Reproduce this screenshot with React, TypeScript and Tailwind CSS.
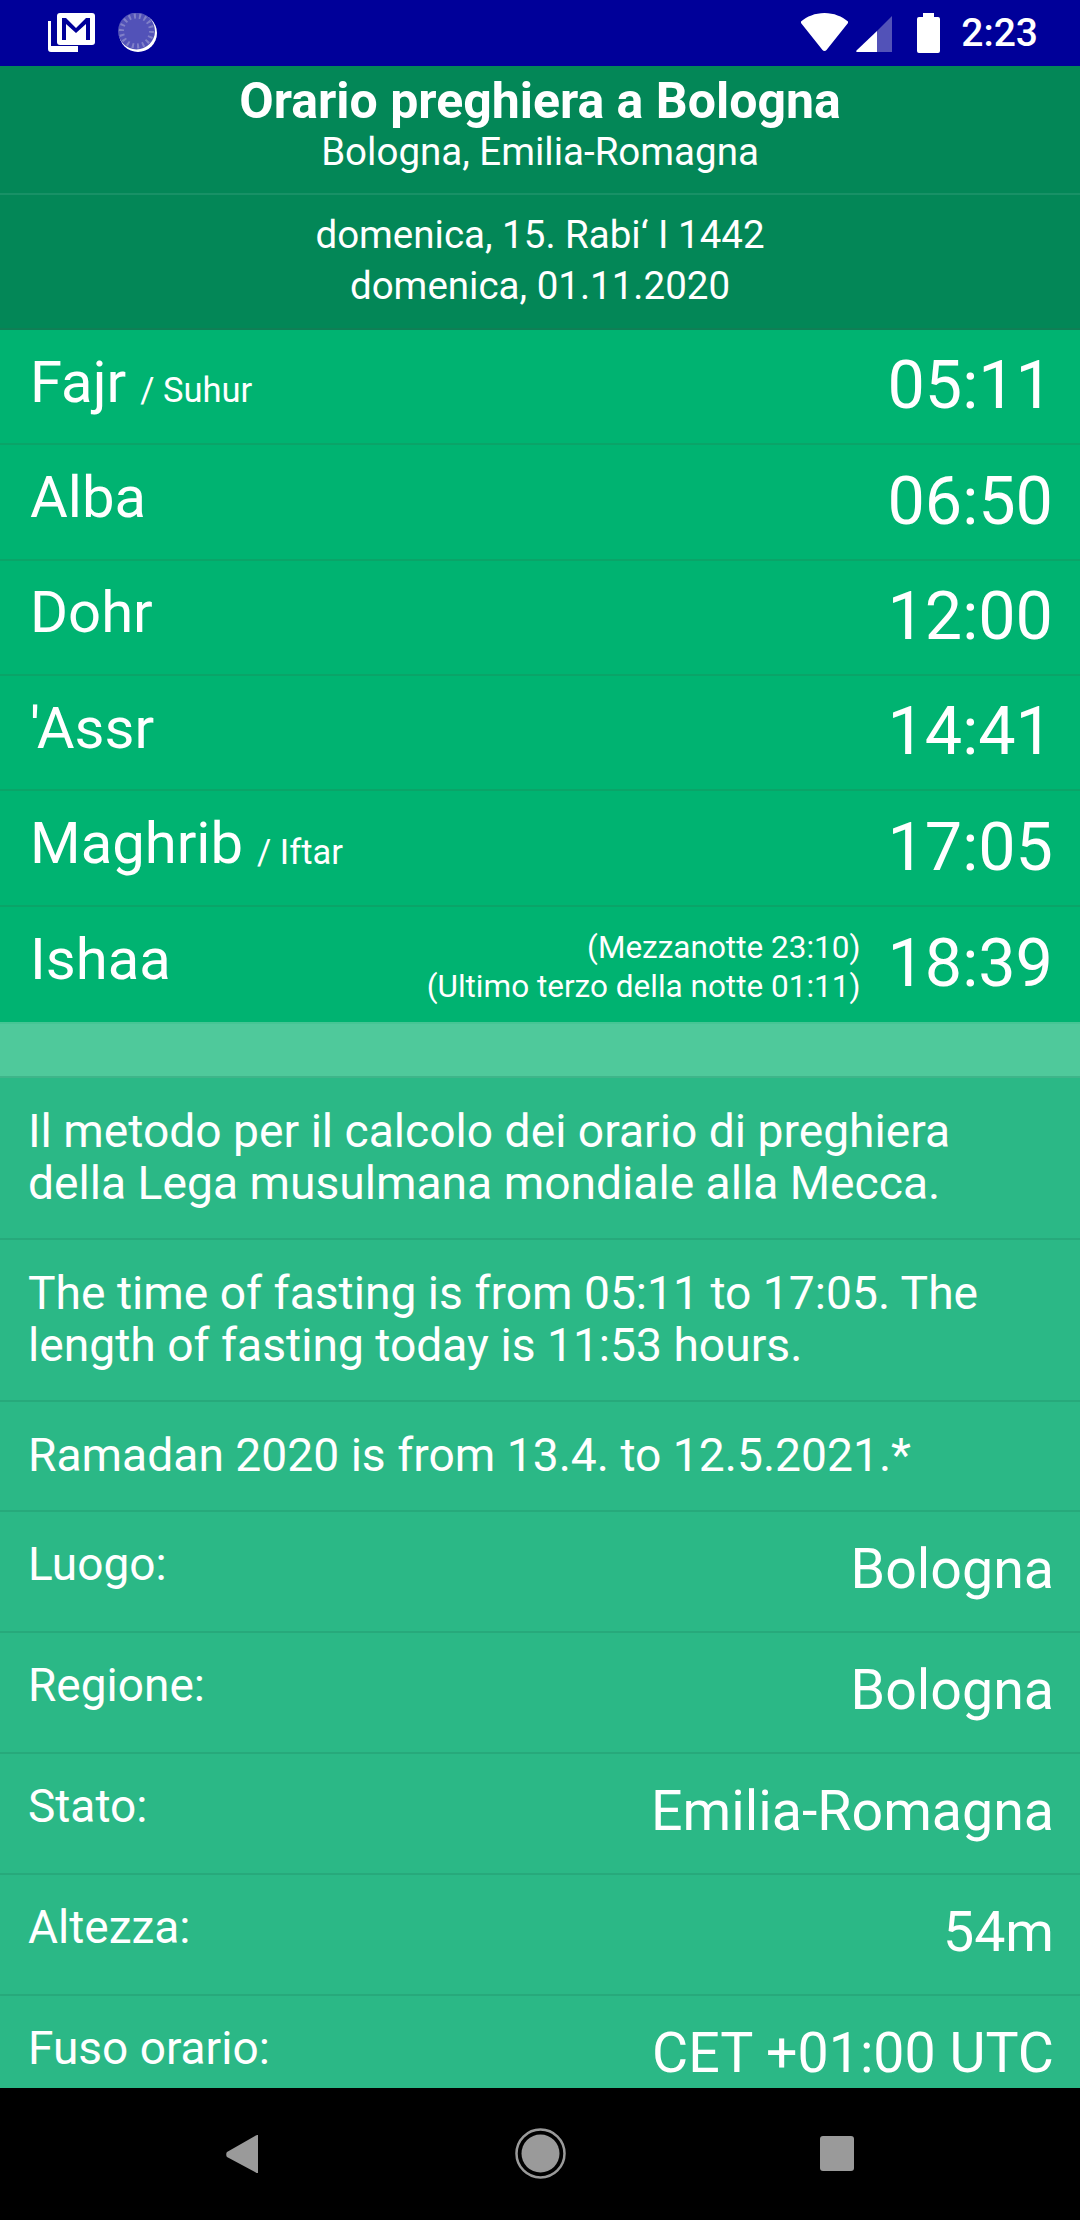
import React from 'react';

const prayers = [
  { name: 'Fajr', sub: '/ Suhur', time: '05:11' },
  { name: 'Alba', time: '06:50' },
  { name: 'Dohr', time: '12:00' },
  { name: "'Assr", time: '14:41' },
  { name: 'Maghrib', sub: '/ Iftar', time: '17:05' },
  { name: 'Ishaa', notes: ['(Mezzanotte 23:10)', '(Ultimo terzo della notte 01:11)'], time: '18:39' },
];

const infoTexts = [
  { text: 'Il metodo per il calcolo dei orario di preghiera della Lega musulmana mondiale alla Mecca.', h: 'h-[162px]' },
  { text: 'The time of fasting is from 05:11 to 17:05. The length of fasting today is 11:53 hours.', h: 'h-[162px]' },
  { text: 'Ramadan 2020 is from 13.4. to 12.5.2021.*', h: 'h-[110px]' },
];

const details = [
  { label: 'Luogo:', value: 'Bologna' },
  { label: 'Regione:', value: 'Bologna' },
  { label: 'Stato:', value: 'Emilia-Romagna' },
  { label: 'Altezza:', value: '54m' },
  { label: 'Fuso orario:', value: 'CET +01:00 UTC' },
];

function StatusBar() {
  return (
    <div className="h-[66px] bg-[#000099] flex items-center relative shrink-0">
      {/* mail stack */}
      <svg className="absolute left-[48px] top-[13px]" width="47" height="39" viewBox="0 0 47 39">
        <path d="M0 8h3v25h27v6H3a3 3 0 0 1-3-3z" fill="#fff" />
        <rect x="9" y="0" width="38" height="32" rx="3" fill="#fff" />
        <path d="M14 27V5h4l10 10L38 5h4v22h-4V11l-10 9-10-9v16z" fill="#000099" />
      </svg>
      {/* sync spinner */}
      <svg className="absolute left-[118px] top-[13px]" width="40" height="40" viewBox="0 0 40 40">
        <circle cx="20" cy="20" r="19" fill="#fff" />
        <circle cx="18.5" cy="18" r="18.5" fill="#5252b8" />
        <circle cx="18.5" cy="18" r="15" fill="none" stroke="#8080c8" strokeWidth="5" strokeDasharray="2 3.2" />
      </svg>
      <div className="ml-auto mr-[42px] flex items-center">
        <svg className="mr-[8px] mt-[-2px]" width="47" height="38" viewBox="0 0 47 38">
          <path d="M23.5 0C14 0 6 3.5 0 8.5c-.5.5-.5 1 0 1.500L21.500 37c1 1.300 3 1.300 4 0L47 10c.5-.5.5-1 0-1.500C41 3.500 33 0 23.500 0z" fill="#fff" />
        </svg>
        <svg className="mr-[24px]" width="37" height="37" viewBox="0 0 37 37">
          <path d="M21 16 36 1v36H21z" fill="#5252b8" />
          <path d="M21 16v21H1c-1 0-1-1-.5-1.500z" fill="#fff" />
        </svg>
        <svg className="mr-[21px]" width="23" height="40" viewBox="0 0 23 40">
          <path d="M6 0h11v4h4a2 2 0 0 1 2 2v32a2 2 0 0 1-2 2H2a2 2 0 0 1-2-2V6a2 2 0 0 1 2-2h4z" fill="#fff" />
        </svg>
        <span className="text-[39px] leading-none text-white font-[Roboto,sans-serif] font-medium">2:23</span>
      </div>
    </div>
  );
}

function NavBar() {
  return (
    <div className="h-[132px] bg-black flex items-center relative shrink-0">
      <svg className="absolute left-[226px] top-[47px]" width="33" height="38" viewBox="0 0 33 38">
        <path d="M32 0v38c-1 0-2 0-3-1L1 22c-1-1-1-4 0-5L29 1c1-1 2-1 3-1z" fill="#9a9a9a" />
      </svg>
      <svg className="absolute left-[515px] top-[40px]" width="51" height="51" viewBox="0 0 51 51">
        <circle cx="25.500" cy="25.500" r="24" fill="none" stroke="#9a9a9a" strokeWidth="2.500" />
        <circle cx="25.500" cy="25.500" r="19" fill="#9a9a9a" />
      </svg>
      <div className="absolute left-[820px] top-[48px] w-[34px] h-[35px] rounded-[3px] bg-[#9a9a9a]" />
    </div>
  );
}

export default function App() {
  return (
    <div className="w-[1080px] h-[2220px] overflow-hidden flex flex-col text-white font-[Roboto,sans-serif]">
      <StatusBar />
      {/* Header */}
      <div className="h-[129px] bg-[#038757] border-b-2 border-[#189166] flex flex-col items-center shrink-0">
        <h1 className="text-[50px] leading-[58px] font-bold mt-[6px]">Orario preghiera a Bologna</h1>
        <p className="text-[38.5px] leading-[44px]">Bologna, Emilia-Romagna</p>
      </div>
      <div className="h-[135px] bg-[#038757] border-b-2 border-[#0f7f55] flex flex-col items-center justify-center shrink-0 text-[38.5px] leading-[51px] pb-[3px]">
        <p>domenica, 15. Rabi‘ I 1442</p>
        <p>domenica, 01.11.2020</p>
      </div>

      {/* Prayer times */}
      <div className="shrink-0">
        {prayers.map((p) => (
          <div key={p.name} className="h-[115.33px] bg-[#00b371] border-b-2 last:border-b-0 border-[#0aa468] flex items-center pl-[30px] pr-[27px]">
            <span className="text-[58px] leading-none mb-[10px]">{p.name}</span>
            {p.sub && <span className="text-[34.5px] leading-none ml-[14px] mt-[8px]">{p.sub}</span>}
            {p.notes && (
              <div className="ml-auto text-right text-[31.5px] leading-[39px] mr-[27px] mt-[5px]">
                {p.notes.map((n) => <div key={n}>{n}</div>)}
              </div>
            )}
            <span className={`text-[66.5px] leading-none mb-[2px] ${p.notes ? '' : 'ml-auto'}`}>{p.time}</span>
          </div>
        ))}
      </div>

      {/* Separator band */}
      <div className="h-[56px] bg-[#4fc99b] border-t-2 border-b-2 border-t-[#45c594] border-b-[#3fb58a] shrink-0" />

      {/* Info */}
      <div className="flex-1 bg-[#2bb886] overflow-hidden">
        {infoTexts.map((t) => (
          <div key={t.text} className={`${t.h} border-b-2 border-[#27a97b] pl-[28px] pr-[28px] flex items-center text-[46.2px] leading-[52px]`}>
            <p className="mb-[2px]">{t.text}</p>
          </div>
        ))}
        {details.map((d) => (
          <div key={d.label} className="h-[121px] border-b-2 border-[#27a97b] pl-[28px] pr-[26px] flex justify-between">
            <span className="text-[46px] leading-none mt-[29px]">{d.label}</span>
            <span className="text-[55.5px] leading-none mt-[30px]">{d.value}</span>
          </div>
        ))}
      </div>
      <NavBar />
    </div>
  );
}
